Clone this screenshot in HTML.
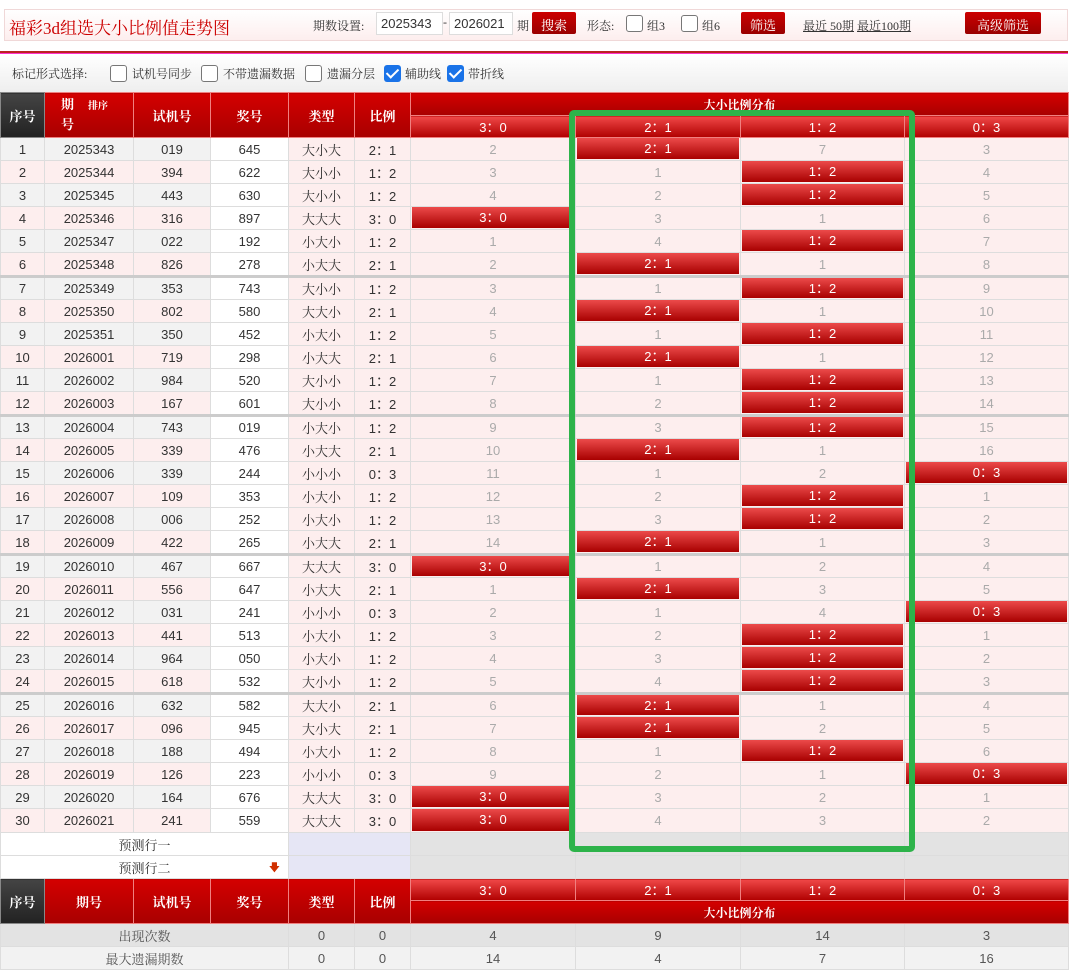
<!DOCTYPE html>
<html><head><meta charset="utf-8">
<style>
*{margin:0;padding:0;box-sizing:border-box}
body{width:1080px;height:962px;overflow:hidden;background:#fff;font-family:"Liberation Sans","Noto Sans CJK SC",sans-serif;position:relative}
#top{position:absolute;left:4px;top:9px;width:1064px;height:32px;border:1px solid #f0d8d8;background:linear-gradient(#fff,#fdeeee);}
#title{position:absolute;left:4px;top:4px;font-size:17px;color:#c00;font-family:"Liberation Serif","Noto Serif CJK SC",serif}
.lbl{position:absolute;top:7px;font-size:12px;color:#333;font-family:"Liberation Serif","Noto Serif CJK SC",serif}
.inp{position:absolute;top:2px;height:23px;width:62px;border:1px solid #ddd;background:#fff;font-size:13px;padding:3px 0 0 4px;color:#333}
.btn{position:absolute;top:2px;height:22px;background:linear-gradient(#c00,#900);color:#fff;font-size:13px;text-align:center;padding-top:3px;border-radius:2px;font-family:"Liberation Serif","Noto Serif CJK SC",serif}
.cb{position:absolute;width:17px;height:17px;border:1px solid #777;border-radius:3px;background:#fff}
.cbc{position:absolute;width:17px;height:17px;border-radius:3px;background:#1a73e8}
.cbc:after{content:"";position:absolute;left:5px;top:1px;width:5px;height:10px;border:solid #fff;border-width:0 2px 2px 0;transform:rotate(45deg)}
a{color:#333;text-decoration:underline}
#rline{position:absolute;left:0;top:51px;width:1068px;height:3px;background:#b22;border-bottom:1px solid #f3c}
#ctrl{position:absolute;left:0;top:55px;width:1068px;height:37px;background:linear-gradient(#fff,#eee)}
table{position:absolute;left:0;border-collapse:collapse;table-layout:fixed;width:1068px}
td{border:1px solid #ddd;text-align:center;font-size:13px;color:#333;height:23px;padding:0;white-space:nowrap;overflow:hidden}
.h td{color:#fff;background:linear-gradient(#d40000,#a80000);border-color:#f08080;font-weight:bold;font-family:"Liberation Serif","Noto Serif CJK SC",serif}
.h td.k{background:linear-gradient(#444,#222);border-color:#888}
.h td.s{background:linear-gradient(#f04848,#b00000);font-weight:normal;font-family:"Liberation Sans",sans-serif;height:22px}
.g{background:#f2f2f2}.p{background:#fdeeee}.w{background:#fff}
.d{background:#fdeeee;color:#aaa;position:relative}
.m{position:absolute;left:1px;right:1px;top:0;bottom:1px;background:linear-gradient(#ec4a4a,#a80000);color:#fff;line-height:21px}
tr.sep td{border-bottom:3px solid #ccc;height:24px}
.t{font-family:"Liberation Serif","Noto Serif CJK SC",serif}
</style></head><body>
<div id="top">
<div id="title">福彩3d组选大小比例值走势图</div>
<div class="lbl" style="left:308px">期数设置:</div>
<div class="inp" style="left:371px;width:67px">2025343</div>
<div class="lbl" style="left:438px;top:5px">-</div>
<div class="inp" style="left:444px;width:64px">2026021</div>
<div class="lbl" style="left:512px">期</div>
<div class="btn" style="left:527px;width:44px">搜索</div>
<div class="lbl" style="left:582px">形态:</div>
<div class="cb" style="left:621px;top:5px"></div>
<div class="lbl" style="left:642px">组3</div>
<div class="cb" style="left:676px;top:5px"></div>
<div class="lbl" style="left:697px">组6</div>
<div class="btn" style="left:736px;width:44px">筛选</div>
<div class="lbl" style="left:798px"><a>最近 50期</a> <a>最近100期</a></div>
<div class="btn" style="left:960px;width:76px">高级筛选</div>
</div>
<div id="rline"></div>
<div id="ctrl">
<div class="lbl" style="left:12px;top:10px">标记形式选择:</div>
<div class="cb" style="left:110px;top:10px"></div><div class="lbl" style="left:132px;top:10px">试机号同步</div>
<div class="cb" style="left:201px;top:10px"></div><div class="lbl" style="left:223px;top:10px">不带遗漏数据</div>
<div class="cb" style="left:305px;top:10px"></div><div class="lbl" style="left:327px;top:10px">遗漏分层</div>
<div class="cbc" style="left:384px;top:10px"></div><div class="lbl" style="left:405px;top:10px">辅助线</div>
<div class="cbc" style="left:447px;top:10px"></div><div class="lbl" style="left:468px;top:10px">带折线</div>
</div>
<table style="top:92px">
<colgroup><col style="width:44px"><col style="width:89px"><col style="width:77px"><col style="width:78px"><col style="width:66px"><col style="width:56px"><col style="width:165px"><col style="width:165px"><col style="width:164px"><col style="width:164px"></colgroup>
<tr class="h"><td class="k" rowspan="2">序号</td><td rowspan="2" style="text-align:left;padding-left:16px;line-height:18px">期<span style="font-size:10px;margin-left:14px">排序</span><br>号</td><td rowspan="2">试机号</td><td rowspan="2">奖号</td><td rowspan="2">类型</td><td rowspan="2">比例</td><td colspan="4" style="font-size:12px;height:23px">大小比例分布</td></tr>
<tr class="h"><td class="s">3：0</td><td class="s">2：1</td><td class="s">1：2</td><td class="s">0：3</td></tr>
<tr><td class="g">1</td><td class="g">2025343</td><td class="g">019</td><td class="w">645</td><td class="p t">大小大</td><td class="p">2：1</td><td class="d">2</td><td class="d"><div class="m">2：1</div></td><td class="d">7</td><td class="d">3</td></tr>
<tr><td class="p">2</td><td class="p">2025344</td><td class="p">394</td><td class="w">622</td><td class="p t">大小小</td><td class="p">1：2</td><td class="d">3</td><td class="d">1</td><td class="d"><div class="m">1：2</div></td><td class="d">4</td></tr>
<tr><td class="g">3</td><td class="g">2025345</td><td class="g">443</td><td class="w">630</td><td class="p t">大小小</td><td class="p">1：2</td><td class="d">4</td><td class="d">2</td><td class="d"><div class="m">1：2</div></td><td class="d">5</td></tr>
<tr><td class="p">4</td><td class="p">2025346</td><td class="p">316</td><td class="w">897</td><td class="p t">大大大</td><td class="p">3：0</td><td class="d"><div class="m">3：0</div></td><td class="d">3</td><td class="d">1</td><td class="d">6</td></tr>
<tr><td class="g">5</td><td class="g">2025347</td><td class="g">022</td><td class="w">192</td><td class="p t">小大小</td><td class="p">1：2</td><td class="d">1</td><td class="d">4</td><td class="d"><div class="m">1：2</div></td><td class="d">7</td></tr>
<tr class="sep"><td class="p">6</td><td class="p">2025348</td><td class="p">826</td><td class="w">278</td><td class="p t">小大大</td><td class="p">2：1</td><td class="d">2</td><td class="d"><div class="m">2：1</div></td><td class="d">1</td><td class="d">8</td></tr>
<tr><td class="g">7</td><td class="g">2025349</td><td class="g">353</td><td class="w">743</td><td class="p t">大小小</td><td class="p">1：2</td><td class="d">3</td><td class="d">1</td><td class="d"><div class="m">1：2</div></td><td class="d">9</td></tr>
<tr><td class="p">8</td><td class="p">2025350</td><td class="p">802</td><td class="w">580</td><td class="p t">大大小</td><td class="p">2：1</td><td class="d">4</td><td class="d"><div class="m">2：1</div></td><td class="d">1</td><td class="d">10</td></tr>
<tr><td class="g">9</td><td class="g">2025351</td><td class="g">350</td><td class="w">452</td><td class="p t">小大小</td><td class="p">1：2</td><td class="d">5</td><td class="d">1</td><td class="d"><div class="m">1：2</div></td><td class="d">11</td></tr>
<tr><td class="p">10</td><td class="p">2026001</td><td class="p">719</td><td class="w">298</td><td class="p t">小大大</td><td class="p">2：1</td><td class="d">6</td><td class="d"><div class="m">2：1</div></td><td class="d">1</td><td class="d">12</td></tr>
<tr><td class="g">11</td><td class="g">2026002</td><td class="g">984</td><td class="w">520</td><td class="p t">大小小</td><td class="p">1：2</td><td class="d">7</td><td class="d">1</td><td class="d"><div class="m">1：2</div></td><td class="d">13</td></tr>
<tr class="sep"><td class="p">12</td><td class="p">2026003</td><td class="p">167</td><td class="w">601</td><td class="p t">大小小</td><td class="p">1：2</td><td class="d">8</td><td class="d">2</td><td class="d"><div class="m">1：2</div></td><td class="d">14</td></tr>
<tr><td class="g">13</td><td class="g">2026004</td><td class="g">743</td><td class="w">019</td><td class="p t">小大小</td><td class="p">1：2</td><td class="d">9</td><td class="d">3</td><td class="d"><div class="m">1：2</div></td><td class="d">15</td></tr>
<tr><td class="p">14</td><td class="p">2026005</td><td class="p">339</td><td class="w">476</td><td class="p t">小大大</td><td class="p">2：1</td><td class="d">10</td><td class="d"><div class="m">2：1</div></td><td class="d">1</td><td class="d">16</td></tr>
<tr><td class="g">15</td><td class="g">2026006</td><td class="g">339</td><td class="w">244</td><td class="p t">小小小</td><td class="p">0：3</td><td class="d">11</td><td class="d">1</td><td class="d">2</td><td class="d"><div class="m">0：3</div></td></tr>
<tr><td class="p">16</td><td class="p">2026007</td><td class="p">109</td><td class="w">353</td><td class="p t">小大小</td><td class="p">1：2</td><td class="d">12</td><td class="d">2</td><td class="d"><div class="m">1：2</div></td><td class="d">1</td></tr>
<tr><td class="g">17</td><td class="g">2026008</td><td class="g">006</td><td class="w">252</td><td class="p t">小大小</td><td class="p">1：2</td><td class="d">13</td><td class="d">3</td><td class="d"><div class="m">1：2</div></td><td class="d">2</td></tr>
<tr class="sep"><td class="p">18</td><td class="p">2026009</td><td class="p">422</td><td class="w">265</td><td class="p t">小大大</td><td class="p">2：1</td><td class="d">14</td><td class="d"><div class="m">2：1</div></td><td class="d">1</td><td class="d">3</td></tr>
<tr><td class="g">19</td><td class="g">2026010</td><td class="g">467</td><td class="w">667</td><td class="p t">大大大</td><td class="p">3：0</td><td class="d"><div class="m">3：0</div></td><td class="d">1</td><td class="d">2</td><td class="d">4</td></tr>
<tr><td class="p">20</td><td class="p">2026011</td><td class="p">556</td><td class="w">647</td><td class="p t">小大大</td><td class="p">2：1</td><td class="d">1</td><td class="d"><div class="m">2：1</div></td><td class="d">3</td><td class="d">5</td></tr>
<tr><td class="g">21</td><td class="g">2026012</td><td class="g">031</td><td class="w">241</td><td class="p t">小小小</td><td class="p">0：3</td><td class="d">2</td><td class="d">1</td><td class="d">4</td><td class="d"><div class="m">0：3</div></td></tr>
<tr><td class="p">22</td><td class="p">2026013</td><td class="p">441</td><td class="w">513</td><td class="p t">小大小</td><td class="p">1：2</td><td class="d">3</td><td class="d">2</td><td class="d"><div class="m">1：2</div></td><td class="d">1</td></tr>
<tr><td class="g">23</td><td class="g">2026014</td><td class="g">964</td><td class="w">050</td><td class="p t">小大小</td><td class="p">1：2</td><td class="d">4</td><td class="d">3</td><td class="d"><div class="m">1：2</div></td><td class="d">2</td></tr>
<tr class="sep"><td class="p">24</td><td class="p">2026015</td><td class="p">618</td><td class="w">532</td><td class="p t">大小小</td><td class="p">1：2</td><td class="d">5</td><td class="d">4</td><td class="d"><div class="m">1：2</div></td><td class="d">3</td></tr>
<tr><td class="g">25</td><td class="g">2026016</td><td class="g">632</td><td class="w">582</td><td class="p t">大大小</td><td class="p">2：1</td><td class="d">6</td><td class="d"><div class="m">2：1</div></td><td class="d">1</td><td class="d">4</td></tr>
<tr><td class="p">26</td><td class="p">2026017</td><td class="p">096</td><td class="w">945</td><td class="p t">大小大</td><td class="p">2：1</td><td class="d">7</td><td class="d"><div class="m">2：1</div></td><td class="d">2</td><td class="d">5</td></tr>
<tr><td class="g">27</td><td class="g">2026018</td><td class="g">188</td><td class="w">494</td><td class="p t">小大小</td><td class="p">1：2</td><td class="d">8</td><td class="d">1</td><td class="d"><div class="m">1：2</div></td><td class="d">6</td></tr>
<tr><td class="p">28</td><td class="p">2026019</td><td class="p">126</td><td class="w">223</td><td class="p t">小小小</td><td class="p">0：3</td><td class="d">9</td><td class="d">2</td><td class="d">1</td><td class="d"><div class="m">0：3</div></td></tr>
<tr><td class="g">29</td><td class="g">2026020</td><td class="g">164</td><td class="w">676</td><td class="p t">大大大</td><td class="p">3：0</td><td class="d"><div class="m">3：0</div></td><td class="d">3</td><td class="d">2</td><td class="d">1</td></tr>
<tr><td class="p" style="height:24px">30</td><td class="p">2026021</td><td class="p">241</td><td class="w">559</td><td class="p t">大大大</td><td class="p">3：0</td><td class="d"><div class="m">3：0</div></td><td class="d">4</td><td class="d">3</td><td class="d">2</td></tr>
<tr><td colspan="4" class="w t">预测行一</td><td colspan="2" style="background:#e6e6f5"></td><td style="background:#e3e3e3"></td><td style="background:#e3e3e3"></td><td style="background:#e3e3e3"></td><td style="background:#e3e3e3"></td></tr>
<tr><td colspan="4" class="w t" style="position:relative">预测行二<span style="position:absolute;right:8px;top:3px;color:#d03000;font-size:11px">&#x1F847;</span></td><td colspan="2" style="background:#e6e6f5"></td><td style="background:#e3e3e3"></td><td style="background:#e3e3e3"></td><td style="background:#e3e3e3"></td><td style="background:#e3e3e3"></td></tr>
<tr class="h"><td class="k" rowspan="2">序号</td><td rowspan="2">期号</td><td rowspan="2">试机号</td><td rowspan="2">奖号</td><td rowspan="2">类型</td><td rowspan="2">比例</td><td class="s">3：0</td><td class="s">2：1</td><td class="s">1：2</td><td class="s">0：3</td></tr>
<tr class="h"><td colspan="4" style="font-size:12px;height:23px">大小比例分布</td></tr>
<tr style="background:#e3e3e3"><td colspan="4" class="t" style="color:#555">出现次数</td><td style="color:#555">0</td><td style="color:#555">0</td><td style="color:#555">4</td><td style="color:#555">9</td><td style="color:#555">14</td><td style="color:#555">3</td></tr>
<tr style="background:#f2f2f2"><td colspan="4" class="t" style="color:#555">最大遗漏期数</td><td style="color:#555">0</td><td style="color:#555">0</td><td style="color:#555">14</td><td style="color:#555">4</td><td style="color:#555">7</td><td style="color:#555">16</td></tr>
</table>
<div style="position:absolute;left:569px;top:110px;width:346px;height:742px;border:6px solid #2db34a;border-radius:5px"></div>
</body></html>
